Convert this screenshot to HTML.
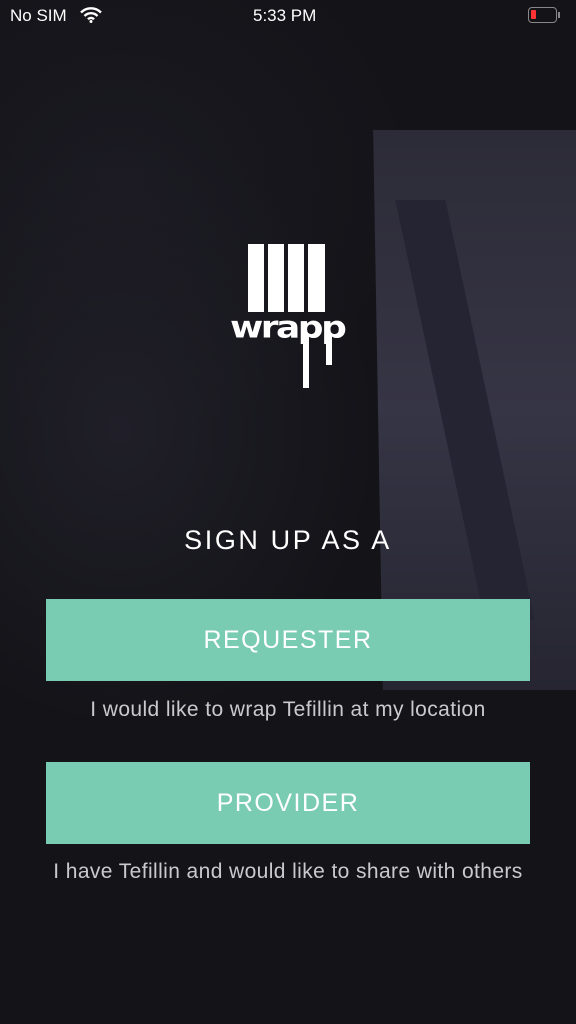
<!DOCTYPE html>
<html><head><meta charset="utf-8"><style>
body{margin:0;width:576px;height:1024px;overflow:hidden;background:#131318;font-family:"Liberation Sans",sans-serif;position:relative}
.bg{position:absolute;inset:0;background:
radial-gradient(ellipse 260px 300px at 120px 430px,#201f28 0%,rgba(20,20,25,0) 100%),
radial-gradient(ellipse 300px 260px at 120px 180px,#1b1a22 0%,rgba(20,20,25,0) 100%);}
.block{position:absolute;left:378px;top:130px;width:220px;height:560px;background:linear-gradient(180deg,#2c2b37,#363545 50%,#262531);transform:skewX(1deg)}
.v{position:absolute;left:440px;top:200px;width:50px;height:420px;background:#252432;transform:skewX(12deg)}
.t{position:absolute;font-size:17px;color:#fff}
.h{position:absolute;top:525px;width:100%;text-align:center;color:#fff;font-size:27px;letter-spacing:2.6px}
.btn{position:absolute;left:46px;width:484px;height:82px;background:#79cbb2;color:#fff;font-size:25px;letter-spacing:1.5px;text-align:center;line-height:82px}
.sub{position:absolute;width:100%;text-align:center;color:#c9c9cf;font-size:21px;letter-spacing:0.4px}
</style></head><body>
<div class="bg"></div><div class="block"></div><div class="v"></div>
<div class="t" style="left:10px;top:6px">No SIM</div>
<svg style="position:absolute;left:80px;top:7px" width="22" height="16" viewBox="0 0 22 16"><path d="M1 5.5a14 14 0 0 1 20 0M4.5 9a9 9 0 0 1 13 0M8 12.3a4 4 0 0 1 6 0" stroke="#fff" stroke-width="2.4" fill="none"/><circle cx="11" cy="14.5" r="1.5" fill="#fff"/></svg>
<div class="t" style="left:253px;top:6px">5:33 PM</div>
<div style="position:absolute;left:528px;top:7px;width:29px;height:16px;border:1.5px solid #888;border-radius:4px;box-sizing:border-box"><div style="position:absolute;left:2px;top:2px;width:5px;height:9px;background:#f33;border-radius:1px"></div></div>
<div style="position:absolute;left:558px;top:12px;width:2px;height:6px;background:#888"></div>
<div style="position:absolute;left:248px;top:244px">
<div style="position:absolute;left:0;width:16px;height:68px;background:#fff"></div>
<div style="position:absolute;left:20px;width:16px;height:68px;background:#fff"></div>
<div style="position:absolute;left:40px;width:16px;height:68px;background:#fff"></div>
<div style="position:absolute;left:60px;width:17px;height:68px;background:#fff"></div>
</div>
<div style="position:absolute;left:230px;top:307px;color:#fff;font-weight:bold;font-size:36px;letter-spacing:-2.5px;font-family:'DejaVu Sans',sans-serif;transform:scaleY(0.85)">wrapp</div>
<div style="position:absolute;left:303px;top:335px;width:6px;height:53px;background:#fff"></div>
<div style="position:absolute;left:326px;top:335px;width:6px;height:30px;background:#fff"></div>
<div class="h">SIGN UP AS A</div>
<div class="btn" style="top:599px">REQUESTER</div>
<div class="sub" style="top:698px">I would like to wrap Tefillin at my location</div>
<div class="btn" style="top:762px">PROVIDER</div>
<div class="sub" style="top:860px">I have Tefillin and would like to share with others</div>
</body></html>
